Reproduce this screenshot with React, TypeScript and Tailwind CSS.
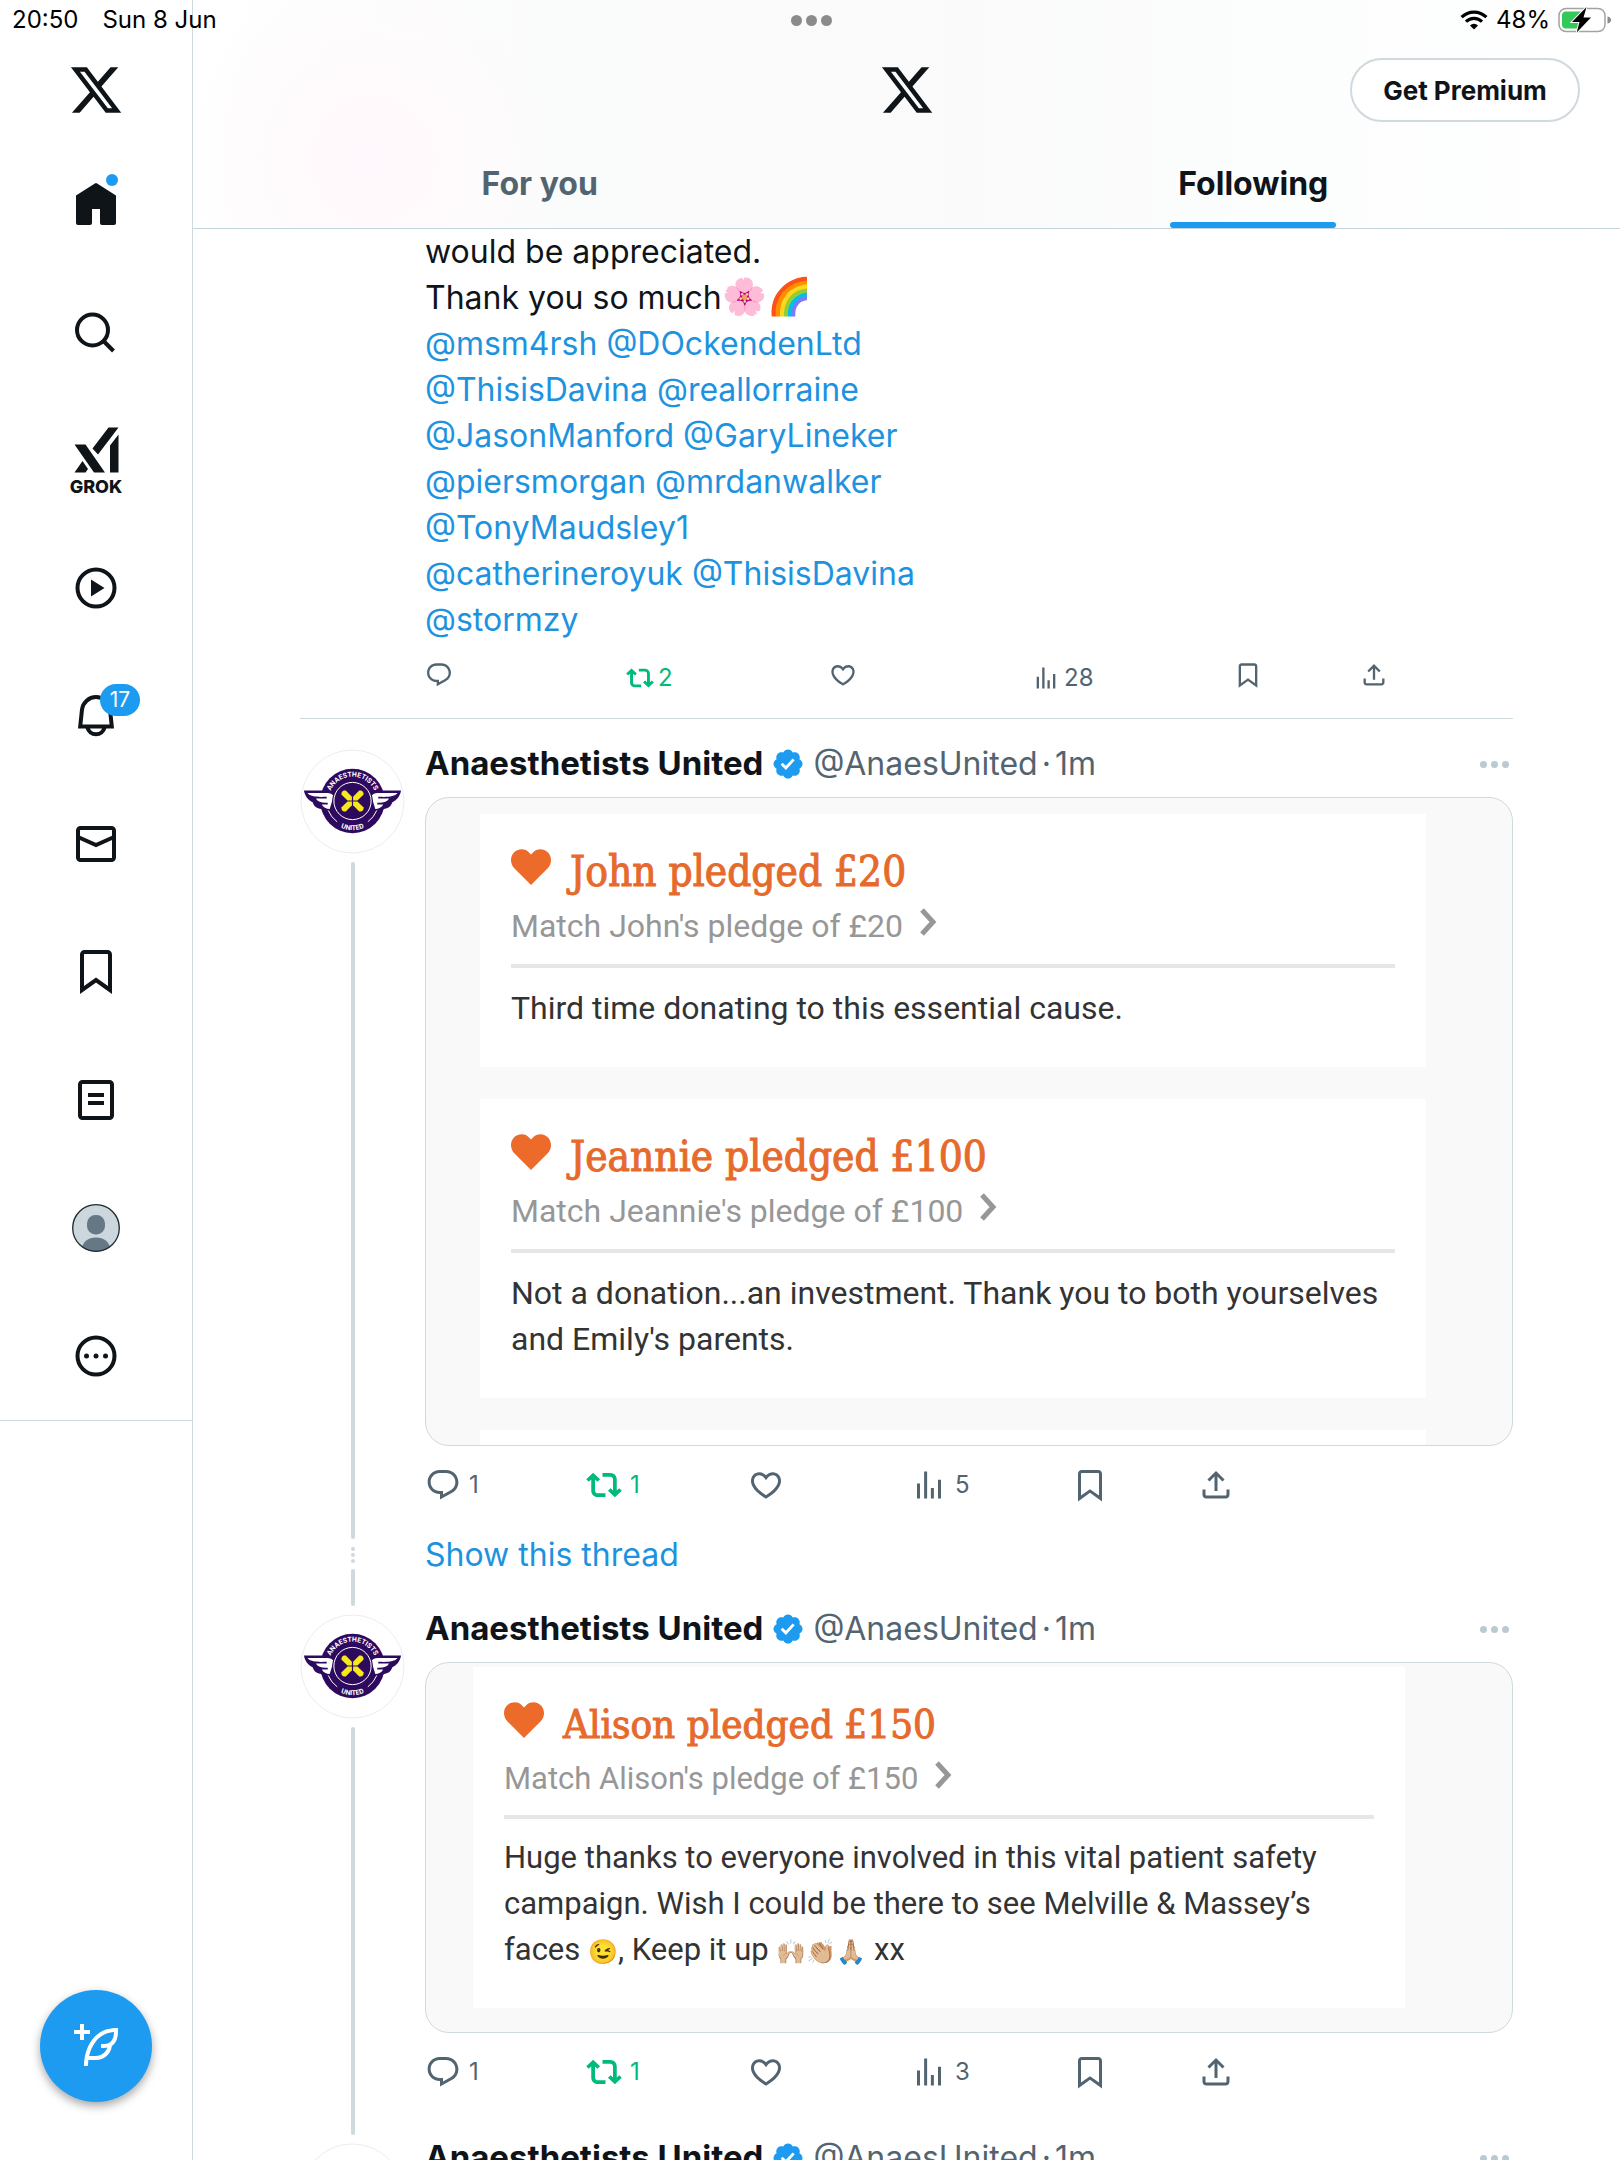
import React from "react";

const P = {
  x: "M18.244 2.25h3.308l-7.227 8.26 8.502 11.24H16.17l-5.214-6.817L4.99 21.75H1.68l7.73-8.835L1.254 2.25H8.08l4.713 6.231zm-1.161 17.52h1.833L7.084 4.126H5.117z",
  reply:
    "M1.751 10c0-4.42 3.584-8 8.005-8h4.366c4.49 0 8.129 3.64 8.129 8.13 0 2.96-1.607 5.68-4.196 7.11l-8.054 4.46v-3.69h-.067c-4.49.1-8.183-3.51-8.183-8.01zm8.005-6c-3.317 0-6.005 2.69-6.005 6 0 3.37 2.77 6.08 6.138 6.01l.351-.01h1.761v2.3l5.087-2.81c1.951-1.08 3.163-3.13 3.163-5.36 0-3.39-2.744-6.13-6.129-6.13H9.756z",
  retweet:
    "M4.75 3.79l4.603 4.3-1.706 1.82L6 8.38v7.37c0 .97.784 1.75 1.75 1.75H13V20H7.75c-2.347 0-4.25-1.9-4.25-4.25V8.38L1.853 9.91.147 8.09l4.603-4.3zm11.5 2.71H11V4h5.25c2.347 0 4.25 1.9 4.25 4.25v7.37l1.647-1.53 1.706 1.82-4.603 4.3-4.603-4.3 1.706-1.82L18 15.62V8.25c0-.97-.784-1.75-1.75-1.75z",
  heart:
    "M16.697 5.5c-1.222-.06-2.679.51-3.89 2.16l-.805 1.09-.806-1.09C9.984 6.01 8.526 5.44 7.304 5.5c-1.243.07-2.349.78-2.91 1.91-.552 1.12-.633 2.78.479 4.82 1.074 1.97 3.257 4.27 7.129 6.61 3.87-2.34 6.052-4.64 7.126-6.61 1.111-2.04 1.03-3.7.477-4.82-.561-1.13-1.666-1.84-2.908-1.91zm4.187 7.69c-1.351 2.48-4.001 5.12-8.379 7.67l-.503.3-.504-.3c-4.379-2.55-7.029-5.19-8.382-7.67-1.36-2.5-1.41-4.86-.514-6.67.887-1.79 2.647-2.91 4.601-3.01 1.651-.09 3.368.56 4.798 2.01 1.429-1.45 3.146-2.1 4.796-2.01 1.954.1 3.714 1.22 4.601 3.01.896 1.81.846 4.17-.514 6.67z",
  views: "M8.75 21V3h2v18h-2zM18 21V8.5h2V21h-2zM4 21l.004-10h2L6 21H4zm9.248 0v-7h2v7h-2z",
  bookmark:
    "M4 4.5C4 3.12 5.119 2 6.5 2h11C18.881 2 20 3.12 20 4.5v18.44l-8-5.71-8 5.71V4.5zM6.5 4c-.276 0-.5.22-.5.5v14.56l6-4.29 6 4.29V4.5c0-.28-.224-.5-.5-.5h-11z",
  share:
    "M12 2.59l5.7 5.7-1.41 1.42L13 6.41V16h-2V6.41l-3.3 3.3-1.41-1.42L12 2.59zM21 15l-.02 3.51c0 1.38-1.12 2.49-2.5 2.49H5.5C4.11 21 3 19.88 3 18.5V15h2v3.5c0 .28.22.5.5.5h12.98c.28 0 .5-.22.5-.5L19 15h2z",
  verified:
    "M20.396 11c-.018-.646-.215-1.275-.57-1.816-.354-.54-.852-.972-1.438-1.246.223-.607.27-1.264.14-1.897-.131-.634-.437-1.218-.882-1.687-.47-.445-1.053-.75-1.687-.882-.633-.13-1.29-.083-1.897.14-.273-.587-.704-1.086-1.245-1.44S11.647 1.62 11 1.604c-.646.017-1.273.213-1.813.568s-.969.854-1.24 1.44c-.608-.223-1.267-.272-1.902-.14-.635.13-1.22.436-1.69.882-.445.47-.749 1.055-.878 1.688-.13.633-.08 1.29.144 1.896-.587.274-1.087.705-1.443 1.245-.356.54-.555 1.17-.574 1.817.02.647.218 1.276.574 1.817.356.54.856.972 1.443 1.245-.224.606-.274 1.263-.144 1.896.13.634.433 1.218.877 1.688.47.443 1.054.747 1.687.878.633.132 1.29.084 1.897-.136.274.586.705 1.084 1.246 1.439.54.354 1.17.551 1.816.569.647-.016 1.276-.213 1.817-.567s.972-.854 1.245-1.44c.604.239 1.266.296 1.903.164.636-.132 1.22-.447 1.68-.907.46-.46.776-1.044.908-1.681s.075-1.299-.165-1.903c.586-.274 1.084-.705 1.439-1.246.354-.54.551-1.17.569-1.816zM9.662 14.85l-3.429-3.428 1.293-1.302 2.072 2.072 4.4-4.794 1.347 1.246z",
  compose:
    "M23 3c-6.62-.1-10.38 2.421-13.05 6.03C7.29 12.61 6 17.331 6 22h2c0-1.007.07-2.012.19-3H12c4.1 0 7.48-3.082 7.94-7.054C22.79 10.147 23.17 6.359 23 3zm-7 8h-1.5v2H16c.63-.016 1.2-.08 1.72-.188C16.95 15.24 14.68 17 12 17H8.55c.57-2.512 1.57-4.851 3-6.78 2.16-2.912 5.29-4.911 9.45-5.187C20.95 8.079 19.9 11 16 11zM4 9V6H1V4h3V1h2v3h3v2H6v3H4z",
};

function Icon({ d, className, box = "0 0 24 24" }: { d: string; className: string; box?: string }) {
  return (
    <svg viewBox={box} fill="currentColor" aria-hidden="true" className={className}>
      <path d={d} />
    </svg>
  );
}

/* ---------- status bar ---------- */

function StatusBar() {
  return (
    <div className="absolute inset-x-0 top-0 z-20 grid h-10 grid-cols-3 items-center pr-2 pl-3 text-[24px] text-black">
      <div className="flex gap-6">
        <span>20:50</span>
        <span>Sun 8 Jun</span>
      </div>
      <button type="button" aria-label="Multitasking" className="flex items-center gap-1 justify-self-center">
        <span className="size-[11px] rounded-full bg-[#8a8b8c]" />
        <span className="size-[11px] rounded-full bg-[#8a8b8c]" />
        <span className="size-[11px] rounded-full bg-[#8a8b8c]" />
      </button>
      <div className="flex items-center gap-2 justify-self-end">
        <svg viewBox="0 0 28 20" className="h-5 w-7" aria-hidden="true" fill="none" stroke="#000">
          <path d="M1.6 7.2a17.5 17.5 0 0 1 24.8 0" strokeWidth="3.2" />
          <path d="M6 11.7a11.3 11.3 0 0 1 16 0" strokeWidth="3.2" />
          <path d="M14 19.6l-4-4.2a5.6 5.6 0 0 1 8 0z" fill="#000" stroke="none" />
        </svg>
        <span>48%</span>
        <svg viewBox="0 0 54 26" className="h-[26px] w-[54px]" aria-hidden="true">
          <rect x="1" y="1.500" width="46" height="23" rx="7" fill="#fff" stroke="#a3a3a3" strokeWidth="1.500" />
          <path d="M49.500 9.500c2.600.6 3.600 2 3.600 3.500s-1 2.900-3.600 3.500z" fill="#8a8a8a" />
          <path d="M8 4.500h16v17H8a4 4 0 0 1-4-4v-9a4 4 0 0 1 4-4z" fill="#34c759" />
          <path d="M28.500 0L14 15h7.500l-2.800 10.500L33 10.500h-7.500z" fill="#000" stroke="#fff" strokeWidth="2" paintOrder="stroke" />
        </svg>
      </div>
    </div>
  );
}

/* ---------- sidebar ---------- */

function NavItem({ label, children }: { label: string; children: React.ReactNode }) {
  return (
    <a href="#" aria-label={label} className="flex h-32 w-full items-center justify-center">
      <span className="relative flex">{children}</span>
    </a>
  );
}

const line = { fill: "none", stroke: "currentColor", strokeWidth: 4 } as const;

function Sidebar() {
  return (
    <nav className="relative flex w-[193px] shrink-0 flex-col border-r border-[#cfd9de] text-[#0f1419]">
      <div className="flex flex-col border-b border-[#cfd9de] pt-12">
        <a href="#" aria-label="X" className="flex h-[84px] items-center justify-center">
          <Icon d={P.x} className="size-14" />
        </a>
        <div className="flex flex-col pt-2">
          <NavItem label="Home">
            <svg viewBox="0 0 48 48" className="size-12" aria-hidden="true" fill="currentColor">
              <path d="M22.900 3.400a2 2 0 0 1 2.200 0L44 15.500V43a2 2 0 0 1-2 2H30a2 2 0 0 1-2-2V29h-8v14a2 2 0 0 1-2 2H6a2 2 0 0 1-2-2V15.500z" />
            </svg>
            <span className="absolute -top-1.5 right-0.5 size-3 rounded-full bg-[#1d9bf0]" />
          </NavItem>
          <NavItem label="Search">
            <svg viewBox="0 0 48 48" className="size-12" aria-hidden="true" {...line}>
              <circle cx="20.500" cy="22" r="15.500" />
              <path d="M31.500 33l10 10" />
            </svg>
          </NavItem>
          <NavItem label="Grok">
            <span className="flex flex-col items-center pt-2">
              <svg viewBox="0 0 46 46" className="size-[46px]" aria-hidden="true" fill="currentColor">
                <path d="M1.500 17.500h11L32 45.500H21zM1.500 45.500l8-11.500 5.500 8-2.500 3.500zM19.500 21.500L35.500.5h10L25 27.500zM37 18.500l8.500-11v38H37z" />
              </svg>
              <span className="text-[18px] leading-7 font-extrabold">GROK</span>
            </span>
          </NavItem>
          <NavItem label="Video">
            <svg viewBox="0 0 48 48" className="size-12" aria-hidden="true" {...line}>
              <circle cx="24" cy="24" r="18.500" />
              <path d="M19 15.500v17L32.500 24z" fill="currentColor" stroke="none" />
            </svg>
          </NavItem>
          <NavItem label="Notifications">
            <svg viewBox="0 0 48 48" className="size-12" aria-hidden="true" {...line}>
              <path d="M8.200 34.500L10 17.500a14.100 14.100 0 0 1 28 0l1.800 17z" />
              <path d="M15.500 35.500a8.700 8.700 0 0 0 17 0" />
            </svg>
            <span className="absolute -top-2 left-7 flex h-8 w-10 items-center justify-center rounded-full bg-[#1d9bf0] text-[21px] text-white">
              17
            </span>
          </NavItem>
          <NavItem label="Messages">
            <svg viewBox="0 0 48 48" className="size-12" aria-hidden="true" {...line}>
              <rect x="6" y="8" width="36" height="32" rx="2.500" />
              <path d="M6 17l18 8 18-8" />
            </svg>
          </NavItem>
          <NavItem label="Bookmarks">
            <svg viewBox="0 0 48 48" className="size-12" aria-hidden="true" {...line}>
              <path d="M10 42V6.500A2.500 2.500 0 0 1 12.500 4h23A2.500 2.500 0 0 1 38 6.500V42L24 32z" />
            </svg>
          </NavItem>
          <NavItem label="Lists">
            <svg viewBox="0 0 48 48" className="size-12" aria-hidden="true" {...line}>
              <rect x="8" y="6" width="32" height="36" rx="2.500" />
              <path d="M16 19h16M16 27h16" />
            </svg>
          </NavItem>
          <NavItem label="Profile">
            <svg viewBox="0 0 48 48" className="size-12" aria-hidden="true">
              <clipPath id="me">
                <circle cx="24" cy="24" r="23.500" />
              </clipPath>
              <circle cx="24" cy="24" r="23.500" fill="#cbd6dd" />
              <g clipPath="url(#me)" fill="#667786">
                <rect x="15" y="11" width="18" height="19.500" rx="8.500" />
                <path d="M9 46c2-8.500 7-12.500 15-12.500S37 37.500 39 46v3H9z" />
              </g>
              <circle cx="24" cy="24" r="23.300" fill="none" stroke="#1c2730" strokeWidth="1.300" />
            </svg>
          </NavItem>
          <NavItem label="More">
            <svg viewBox="0 0 48 48" className="size-12" aria-hidden="true" {...line}>
              <circle cx="24" cy="24" r="18.500" />
              <g fill="currentColor" stroke="none">
                <circle cx="14.500" cy="24" r="2.500" />
                <circle cx="24" cy="24" r="2.500" />
                <circle cx="33.500" cy="24" r="2.500" />
              </g>
            </svg>
          </NavItem>
        </div>
      </div>
      <div className="mt-auto flex justify-center pb-[58px]">
        <button
          type="button"
          aria-label="Post"
          className="flex size-28 items-center justify-center rounded-full bg-[#1d9bf0] text-white shadow-[0_4px_10px_rgba(0,0,0,0.35)]"
        >
          <Icon d={P.compose} className="size-12" />
        </button>
      </div>
    </nav>
  );
}

/* ---------- header ---------- */

function Header() {
  return (
    <header className="relative flex h-[229px] shrink-0 flex-col border-b border-[#c6d5dd] bg-[radial-gradient(circle_at_180px_160px,#fff7fb_0,#fffbfd_90px,transparent_190px),linear-gradient(90deg,#ffffff_0%,#fafbfb_28%,#fafafb_55%,#fcfdfd_75%,#ffffff_100%)] pt-10">
      <div className="grid h-[100px] grid-cols-3 items-center px-10">
        <span />
        <Icon d={P.x} className="size-14 justify-self-center text-[#0f1419]" />
        <button
          type="button"
          className="flex h-16 w-[230px] items-center justify-center justify-self-end rounded-full border-2 border-[#cfd9de] bg-white text-[26px] font-bold text-[#0f1419]"
        >
          Get Premium
        </button>
      </div>
      <div role="tablist" className="grid flex-1 grid-cols-2 text-[32px] font-bold">
        <button type="button" role="tab" aria-selected="false" className="flex justify-center pt-5 pr-5 text-[#536471]">
          For you
        </button>
        <button type="button" role="tab" aria-selected="true" className="flex justify-center pr-5 text-[#0f1419]">
          <span className="flex h-full flex-col justify-between pt-5">
            <span className="px-2">Following</span>
            <span className="h-1.5 rounded-full bg-[#1d9bf0]" />
          </span>
        </button>
      </div>
    </header>
  );
}

/* ---------- posts ---------- */

const mentions = [
  ["@msm4rsh", "@DOckendenLtd"],
  ["@ThisisDavina", "@reallorraine"],
  ["@JasonManford", "@GaryLineker"],
  ["@piersmorgan", "@mrdanwalker"],
  ["@TonyMaudsley1"],
  ["@catherineroyuk", "@ThisisDavina"],
  ["@stormzy"],
];

function Action({ d, label, count, green }: { d: string; label: string; count?: string; green?: boolean }) {
  return (
    <button
      type="button"
      aria-label={label}
      className={green ? "flex items-center gap-2 text-[#00ba7c]" : "flex items-center gap-2 text-[#536471]"}
    >
      <Icon d={d} className="size-9" />
      {count && <span>{count}</span>}
    </button>
  );
}

function Actions({ views }: { views: string }) {
  return (
    <div className="grid h-[78px] grid-cols-[161px_162px_163px_161px_126px_1fr] items-center text-[24px]">
      <Action d={P.reply} label="Reply" count="1" />
      <Action d={P.retweet} label="Repost" count="1" green />
      <Action d={P.heart} label="Like" />
      <Action d={P.views} label="Views" count={views} />
      <Action d={P.bookmark} label="Bookmark" />
      <Action d={P.share} label="Share" />
    </div>
  );
}

function FirstPost() {
  return (
    <article className="border-b border-[#cfd9de] pl-[125px]">
      <p className="text-[32px] leading-[46px] text-[#0f1419]">
        would be appreciated.
        <br />
        Thank you so much<span className="text-[36px] leading-none">🌸🌈</span>
        {mentions.map((row, i) => (
          <span key={i} className="block text-[#1d93e0]">
            {row.map((m, j) => (
              <React.Fragment key={j}>
                {j > 0 && " "}
                <a href="#">{m}</a>
              </React.Fragment>
            ))}
          </span>
        ))}
      </p>
      <div className="grid h-[75px] grid-cols-[201px_203px_203px_202px_126px_1fr] items-start pt-[18px] text-[24px] leading-[34px] text-[#536471]">
        <button type="button" aria-label="Reply">
          <Icon d={P.reply} className="size-7" />
        </button>
        <button type="button" aria-label="Repost" className="flex items-center gap-1 text-[#00ba7c]">
          <Icon d={P.retweet} className="size-7" />2
        </button>
        <button type="button" aria-label="Like">
          <Icon d={P.heart} className="size-7" />
        </button>
        <button type="button" aria-label="Views" className="flex items-center gap-1">
          <Icon d={P.views} className="size-7" />
          28
        </button>
        <button type="button" aria-label="Bookmark">
          <Icon d={P.bookmark} className="size-7" />
        </button>
        <button type="button" aria-label="Share">
          <Icon d={P.share} className="size-7" />
        </button>
      </div>
    </article>
  );
}

function Wing() {
  return (
    <>
      <path d="M4 42h22c5 0 9 1.500 11 4.500l-5 21c-5-.5-9-3-10.500-7-4.500-.5-7.500-2.500-8.500-6.500C8.500 52 5 48 4 42z" fill="#2e0a5e" />
      <path d="M7.500 44.500h20c3 0 5 1 6.500 3l-4 13c-3.500 0-6.500-1.500-8-4.500h6v-1.800c-6 .3-10-.7-12-4.200h11v-1.700c-9 .4-16.500.2-19.500-3.800z" fill="#fff" />
    </>
  );
}

function Avatar({ id }: { id: string }) {
  return (
    <svg viewBox="0 0 106 106" className="size-[105px] shrink-0" role="img" aria-label="Anaesthetists United">
      <circle cx="53" cy="53" r="52" fill="#fff" stroke="#ececef" />
      <circle cx="53" cy="52.500" r="32.500" fill="#2e0a5e" />
      <Wing />
      <g transform="translate(106 0) scale(-1 1)">
        <Wing />
      </g>
      <circle cx="53" cy="52.500" r="20.500" fill="#2e0a5e" />
      <circle cx="53" cy="52.500" r="18.800" fill="none" stroke="#fff" strokeWidth="1" />
      <path d="M28.500 62a26.500 26.500 0 0 0 9 11.500M77.500 62a26.500 26.500 0 0 1-9 11.500" fill="none" stroke="#fff" strokeWidth="1" />
      <g fill="#f7e81e">
        <path d="M52.400 51.900h-4.400l-6-5.600c-.8-2.800 1.500-4.900 4.200-4.300l6.200 6.200z" />
        <path d="M53.600 51.900h4.400l6-5.600c.8-2.800-1.500-4.900-4.200-4.300l-6.200 6.200z" />
        <path d="M52.400 53.100h-4.400l-6 5.600c-.8 2.800 1.500 4.900 4.200 4.300l6.200-6.200z" />
        <path d="M53.600 53.100h4.400l6 5.600c.8 2.800-1.500 4.900-4.200 4.300l-6.200-6.200z" />
      </g>
      <path id={`${id}-top`} d="M28.500 52.500a24.500 24.500 0 0 1 49 0" fill="none" />
      <path id={`${id}-bottom`} d="M25 62a29.600 29.600 0 0 0 56 0" fill="none" />
      <g fill="#fff" fontSize="7" fontWeight="700" textAnchor="middle" fontFamily="Roboto">
        <text>
          <textPath href={`#${id}-top`} startOffset="50%">
            ANAESTHETISTS
          </textPath>
        </text>
        <text>
          <textPath href={`#${id}-bottom`} startOffset="50%">
            UNITED
          </textPath>
        </text>
      </g>
    </svg>
  );
}

function PostHead() {
  return (
    <div className="flex h-[46px] items-center text-[32px] text-[#536471]">
      <a href="#" className="text-[33px] font-bold text-[#0f1419]">
        Anaesthetists United
      </a>
      <Icon d={P.verified} box="0 0 22 22" className="mr-2 ml-2 size-[34px] text-[#1d9bf0]" />
      <span>@AnaesUnited</span>
      <span className="mx-1">·</span>
      <span>1m</span>
      <button type="button" aria-label="More" className="mr-1 ml-auto flex gap-1">
        <span className="size-[7px] rounded-full bg-[#b9cad3]" />
        <span className="size-[7px] rounded-full bg-[#b9cad3]" />
        <span className="size-[7px] rounded-full bg-[#b9cad3]" />
      </button>
    </div>
  );
}

type PledgeProps = { title: string; match: string; compact?: boolean; children: React.ReactNode };

function Pledge({ title, match, compact, children }: PledgeProps) {
  return (
    <section
      className={
        compact
          ? "bg-white px-[31px] pt-[33px] font-['Roboto',sans-serif] text-[31px]"
          : "bg-white px-[31px] pt-[33px] font-['Roboto',sans-serif] text-[32px]"
      }
    >
      <h3
        className={
          compact
            ? "flex h-12 items-center gap-[19px] font-['DejaVu_Serif_Condensed','DejaVu_Serif',serif] text-[40px] text-[#e66a2c] [-webkit-text-stroke:1px_#e66a2c]"
            : "flex h-12 items-center gap-[19px] font-['DejaVu_Serif_Condensed','DejaVu_Serif',serif] text-[42px] text-[#e66a2c] [-webkit-text-stroke:1px_#e66a2c]"
        }
      >
        <svg viewBox="0 0 40 36" className="mb-2 h-9 w-10 shrink-0" aria-hidden="true" fill="#ec6b2a">
          <path d="M20 36L3.500 19.500C-1 15-1 8 2.500 4S13-1 17 2.500l3 3 3-3C27-1 34-.5 37.500 4s3.500 11-1 15.500z" />
        </svg>
        {title}
      </h3>
      <a href="#" className="mt-[7px] flex h-12 items-center gap-4 text-[#979797]">
        {match}
        <svg viewBox="0 0 18 28" className="mb-2 h-7 w-[18px]" aria-hidden="true" fill="none" stroke="#979797" strokeWidth="5">
          <path d="M3 2l11 12L3 26" />
        </svg>
      </a>
      <hr className={compact ? "mt-3 border-t-4 border-[#e6e6e6]" : "mt-3.5 border-t-4 border-[#e6e6e6]"} />
      <p className={compact ? "pt-4 pb-[35px] leading-[46px] text-[#333]" : "pt-[17px] pb-9 leading-[46px] text-[#333]"}>
        {children}
      </p>
    </section>
  );
}

function Rail({ id, children }: { id: string; children?: React.ReactNode }) {
  return (
    <div className="flex w-[105px] shrink-0 flex-col items-center pt-2">
      <Avatar id={id} />
      {children}
    </div>
  );
}

export default function App() {
  return (
    <div className="relative flex h-screen overflow-hidden bg-white font-['Inter',sans-serif]">
      <StatusBar />
      <Sidebar />
      <main className="flex min-w-0 flex-1 flex-col">
        <Header />
        <div className="mx-[107px]">
          <FirstPost />

          <article className="flex gap-5 pt-[22px]">
            <Rail id="a1">
              <div className="mt-2 w-1 flex-1 rounded-full bg-[#cfd9de]" />
              <div className="mt-2 mb-1.5 flex flex-col gap-0.5">
                <span className="size-1 rounded-full bg-[#cfd9de]" />
                <span className="size-1 rounded-full bg-[#cfd9de]" />
                <span className="size-1 rounded-full bg-[#cfd9de]" />
              </div>
              <div className="h-[37px] w-1 rounded-full bg-[#cfd9de]" />
            </Rail>
            <div className="min-w-0 flex-1">
              <PostHead />
              <div className="mt-2.5 flex h-[649px] flex-col gap-8 overflow-hidden rounded-3xl border border-[#cfd9de] bg-[#f9f9f9] pt-4 pr-[86px] pl-[54px]">
                <Pledge title="John pledged £20" match="Match John's pledge of £20">
                  Third time donating to this essential cause.
                </Pledge>
                <Pledge title="Jeannie pledged £100" match="Match Jeannie's pledge of £100">
                  Not a donation...an investment. Thank you to both yourselves
                  <br />
                  and Emily's parents.
                </Pledge>
                <div className="h-6 shrink-0 bg-white" />
              </div>
              <Actions views="5" />
              <a href="#" className="mt-2 mb-7 block text-[32px] leading-[46px] text-[#1d93e0]">
                Show this thread
              </a>
            </div>
          </article>

          <article className="flex gap-5">
            <Rail id="a2">
              <div className="mt-2 w-1 flex-1 rounded-full bg-[#cfd9de]" />
            </Rail>
            <div className="min-w-0 flex-1 pb-6">
              <PostHead />
              <div className="mt-2.5 overflow-hidden rounded-3xl border border-[#cfd9de] bg-[#f9f9f9] pt-1 pr-[107px] pb-6 pl-[47px]">
                <Pledge compact title="Alison pledged £150" match="Match Alison's pledge of £150">
                  Huge thanks to everyone involved in this vital patient safety
                  <br />
                  campaign. Wish I could be there to see Melville &amp; Massey’s
                  <br />
                  faces <span className="text-[24px] leading-none">😉</span>, Keep it up{" "}
                  <span className="text-[24px] leading-none">🙌🏼👏🏼🙏🏼</span> xx
                </Pledge>
              </div>
              <Actions views="3" />
            </div>
          </article>

          <article className="flex gap-5">
            <Rail id="a3" />
            <div className="min-w-0 flex-1">
              <PostHead />
            </div>
          </article>
        </div>
      </main>
    </div>
  );
}
